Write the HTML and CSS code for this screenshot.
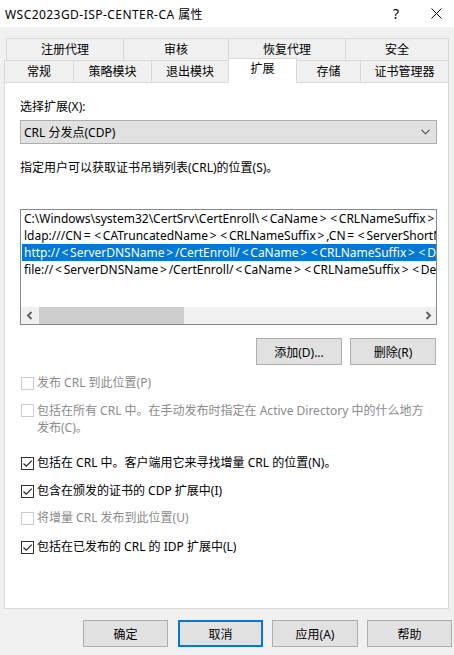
FILE: index.html
```html
<!DOCTYPE html>
<html lang="zh-CN">
<head>
<meta charset="utf-8">
<title>WSC2023GD-ISP-CENTER-CA 属性</title>
<link rel="stylesheet" href="styles.css">
</head>
<body>
<div class="window">
  <div class="titlebar">
    <span class="title">WSC2023GD-ISP-CENTER-CA 属性</span>
    <span class="help">?</span>
    <span class="close"><svg width="11" height="11" viewBox="0 0 11 11"><path d="M0.5 0.5L10.5 10.5M10.5 0.5L0.5 10.5" stroke="#000" stroke-width="1" fill="none"/></svg></span>
  </div>

  <div class="tabs">
    <div class="tabrow row1">
      <div class="tab">注册代理</div>
      <div class="tab">审核</div>
      <div class="tab">恢复代理</div>
      <div class="tab">安全</div>
    </div>
    <div class="tabrow row2">
      <div class="tab">常规</div>
      <div class="tab">策略模块</div>
      <div class="tab">退出模块</div>
      <div class="tab active">扩展</div>
      <div class="tab">存储</div>
      <div class="tab">证书管理器</div>
    </div>
  </div>

  <div class="panel">
    <div class="label">选择扩展(X):</div>
    <div class="select">
      <span>CRL 分发点(CDP)</span>
      <svg class="chev" width="9" height="6" viewBox="0 0 9 6"><path d="M0.5 0.8L4.5 4.8L8.5 0.8" stroke="#444" stroke-width="1.1" fill="none"/></svg>
    </div>
    <div class="desc">指定用户可以获取证书吊销列表(CRL)的位置(S)。</div>

    <div class="listbox">
      <div class="items">
        <div class="item">C:\Windows\system32\CertSrv\CertEnroll\<span class="p">&lt;</span>CaName<span class="p">&gt;</span><span class="p">&lt;</span>CRLNameSuffix<span class="p">&gt;</span></div>
        <div class="item">ldap:///CN<span class="p">=</span><span class="p">&lt;</span>CATruncatedName<span class="p">&gt;</span><span class="p">&lt;</span>CRLNameSuffix<span class="p">&gt;</span>,CN<span class="p">=</span><span class="p">&lt;</span>ServerShortName</div>
        <div class="item sel">http://<span class="p">&lt;</span>ServerDNSName<span class="p">&gt;</span>/CertEnroll/<span class="p">&lt;</span>CaName<span class="p">&gt;</span><span class="p">&lt;</span>CRLNameSuffix<span class="p">&gt;</span><span class="p">&lt;</span>Delta</div>
        <div class="item">file://<span class="p">&lt;</span>ServerDNSName<span class="p">&gt;</span>/CertEnroll/<span class="p">&lt;</span>CaName<span class="p">&gt;</span><span class="p">&lt;</span>CRLNameSuffix<span class="p">&gt;</span><span class="p">&lt;</span>Delta</div>
      </div>
      <div class="hscroll">
        <div class="arrow"><svg width="8" height="9" viewBox="0 0 8 9"><path d="M5.5 1L2 4.5L5.5 8" stroke="#606060" stroke-width="2" fill="none"/></svg></div>
        <div class="thumb"></div>
        <div class="track"></div>
        <div class="arrow"><svg width="8" height="9" viewBox="0 0 8 9"><path d="M2.5 1L6 4.5L2.5 8" stroke="#606060" stroke-width="2" fill="none"/></svg></div>
      </div>
    </div>

    <div class="btnrow">
      <div class="btn">添加(D)...</div>
      <div class="btn">删除(R)</div>
    </div>

    <div class="check disabled c1"><span class="box"></span><span class="text">发布 CRL 到此位置(P)</span></div>
    <div class="check disabled c2"><span class="box"></span><span class="text">包括在所有 CRL 中。在手动发布时指定在 Active Directory 中的什么地方<br>发布(C)。</span></div>
    <div class="check c3"><span class="box"><svg width="11" height="11" viewBox="0 0 11 11"><path d="M1.5 5.5L4.2 8.2L9.8 2.6" stroke="#222" stroke-width="1.2" fill="none"/></svg></span><span class="text">包括在 CRL 中。客户端用它来寻找增量 CRL 的位置(N)。</span></div>
    <div class="check c4"><span class="box"><svg width="11" height="11" viewBox="0 0 11 11"><path d="M1.5 5.5L4.2 8.2L9.8 2.6" stroke="#222" stroke-width="1.2" fill="none"/></svg></span><span class="text">包含在颁发的证书的 CDP 扩展中(I)</span></div>
    <div class="check disabled c5"><span class="box"></span><span class="text">将增量 CRL 发布到此位置(U)</span></div>
    <div class="check c6"><span class="box"><svg width="11" height="11" viewBox="0 0 11 11"><path d="M1.5 5.5L4.2 8.2L9.8 2.6" stroke="#222" stroke-width="1.2" fill="none"/></svg></span><span class="text">包括在已发布的 CRL 的 IDP 扩展中(L)</span></div>
  </div>

  <div class="footer">
    <div class="btn fbtn ok">确定</div>
    <div class="btn fbtn default">取消</div>
    <div class="btn fbtn apply">应用(A)</div>
    <div class="btn fbtn">帮助</div>
  </div>
</div>
</body>
</html>
```

FILE: styles.css
```css
* { box-sizing: border-box; }
html, body { margin: 0; padding: 0; }
body {
  width: 454px;
  height: 655px;
  overflow: hidden;
  background: #f0f0f0;
  font-family: "Noto Sans", "Noto Sans CJK SC", sans-serif;
  font-size: 12px;
  color: #000;
}
.window { width: 454px; height: 655px; }

.titlebar {
  height: 27px;
  background: #fff;
  display: flex;
  align-items: center;
  padding-left: 5px;
  font-size: 12px;
}
.title { flex: 1; white-space: nowrap; letter-spacing: 0.45px; }
.help { width: 20px; text-align: center; font-size: 14px; margin-right: 25px; }
.close { width: 11px; height: 11px; display: flex; margin-right: 12px; }

.tabs { margin-top: 11px; }
.tabrow { display: flex; height: 22px; }
.row1 { margin-left: 6px; }
.row2 { margin-left: 4px; }
.tab {
  height: 22px;
  line-height: 21px;
  text-align: center;
  border: 1px solid #d9d9d9;
  border-bottom: none;
  margin-right: -1px;
  background: #f0f0f0;
}
.row1 .tab:nth-child(1) { width: 118px; }
.row1 .tab:nth-child(2) { width: 106px; }
.row1 .tab:nth-child(3) { width: 118px; }
.row1 .tab:nth-child(4) { width: 104px; }
.row2 .tab:nth-child(1) { width: 70px; }
.row2 .tab:nth-child(2) { width: 79px; }
.row2 .tab:nth-child(3) { width: 78px; }
.row2 .tab:nth-child(4) { width: 69px; }
.row2 .tab:nth-child(5) { width: 65px; }
.row2 .tab:nth-child(6) { width: 89px; }
.tab.active {
  background: #fff;
  height: 25px;
  margin-top: -2px;
  line-height: 20px;
  position: relative;
  z-index: 1;
}

.panel {
  margin-left: 4px;
  width: 445px;
  height: 527px;
  background: #fff;
  border: 1px solid #d9d9d9;
  padding: 0 0 0 15px;
}

.label { margin-top: 16px; line-height: 16px; }
.select {
  margin-top: 5px;
  width: 417px;
  height: 24px;
  background: #e1e1e1;
  border: 1px solid #adadad;
  display: flex;
  align-items: center;
  padding-left: 3px;
  padding-right: 6px;
}
.select span { flex: 1; }
.desc { margin-top: 16px; line-height: 16px; }

.listbox {
  margin-top: 33px;
  width: 417px;
  height: 116px;
  border: 1px solid #828790;
  display: flex;
  flex-direction: column;
}
.items { height: 97px; overflow: hidden; padding-left: 1px; }
.item {
  height: 17px;
  line-height: 17px;
  white-space: nowrap;
  padding-left: 2px;
}
.item .p { padding: 0 1.8px; }
.item.sel { background: #0078d7; color: #fff; }

.hscroll {
  height: 17px;
  display: flex;
  background: #f0f0f0;
}
.arrow {
  width: 17px;
  display: flex;
  align-items: center;
  justify-content: center;
}
.thumb { width: 145px; background: #cdcdcd; margin-left: 1px; }
.track { flex: 1; }

.btnrow {
  margin-top: 13px;
  width: 417px;
  display: flex;
  justify-content: flex-end;
  gap: 8px;
  padding-right: 1px;
}
.btn {
  height: 27px;
  width: 86px;
  background: #e1e1e1;
  border: 1px solid #adadad;
  display: flex;
  align-items: center;
  justify-content: center;
}

.check { display: flex; align-items: flex-start; line-height: 16px; }
.check .box {
  flex: none;
  width: 13px;
  height: 13px;
  border: 1px solid #333;
  margin: 2px 3px 0 1px;
  display: flex;
  align-items: center;
  justify-content: center;
  background: #fff;
}
.check.disabled .box { border-color: #cccccc; }
.check.disabled .text { color: #8a8a8a; }
.c1 { margin-top: 10px; }
.c2 { margin-top: 11px; line-height: 17px; }
.c2 .text { white-space: nowrap; }
.c3 { margin-top: 19px; }
.c4 { margin-top: 12px; }
.c5 { margin-top: 11px; }
.c6 { margin-top: 13px; }

.footer {
  margin-top: 11px;
  display: flex;
  padding-left: 83px;
  gap: 9px;
}
.fbtn { width: 85px; }
.ok { margin-right: 1px; }
.apply { width: 86px; }
.default { border: 2px solid #0078d7; }
```
